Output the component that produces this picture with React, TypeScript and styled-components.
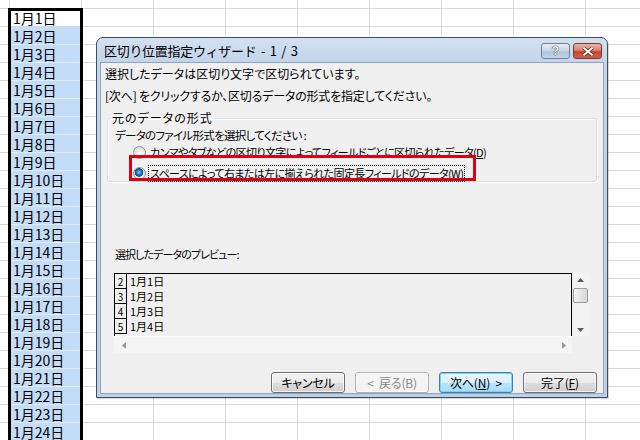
import styled, {createGlobalStyle} from 'styled-components'

const UI_FONT = `"Noto Sans CJK JP", "Noto Sans", sans-serif`

const GlobalStyle = createGlobalStyle`
  html, body {
    margin: 0;
    padding: 0;
    background: #fff;
  }
  body {
    font-family: ${UI_FONT};
    color: #000;
  }
`

const COLS = 10
const ROWS = 25

function App() {
  const cells = []
  for (let r = 0; r < ROWS; r++) {
    for (let c = 0; c < COLS; c++) {
      const isDate = c === 1 && r >= 1
      cells.push(
        <Cell key={`${r}-${c}`} $selected={c === 1 && r >= 2}>
          {isDate ? `1月${r}日` : ''}
        </Cell>,
      )
    }
  }

  return (
    <>
      <GlobalStyle />
      <Sheet>
        {cells}
        <SelectionFrame />
        <Dialog>
          <TitleBar>
            <Title>区切り位置指定ウィザード - 1 / 3</Title>
            <CaptionButtons>
              <CaptionButton $kind="help">?</CaptionButton>
              <CaptionButton $kind="close">
                <svg width="12" height="9" viewBox="0 0 12 9">
                  <path
                    d="M1.5 0.8 L10.5 8.2 M10.5 0.8 L1.5 8.2"
                    stroke="#4a1a14"
                    strokeWidth="3.4"
                  />
                  <path
                    d="M1.5 0.8 L10.5 8.2 M10.5 0.8 L1.5 8.2"
                    stroke="#fff"
                    strokeWidth="2"
                  />
                </svg>
              </CaptionButton>
            </CaptionButtons>
          </TitleBar>
          <Client>
            <Line $spacing={0}>選択したデータは区切り文字で区切られています。</Line>
            <Line $spacing={-0.2}>[次へ] をクリックするか、区切るデータの形式を指定してください。</Line>
            <Group>
              <Legend>元のデータの形式</Legend>
              <GroupText>データのファイル形式を選択してください :</GroupText>
              <RadioRow>
                <Radio />
                <RadioLabel>
                  カンマやタブなどの区切り文字によってフィールドごとに区切られたデータ(<u>D</u>)
                </RadioLabel>
              </RadioRow>
              <RadioRow $second>
                <Radio $checked />
                <RadioLabel $focused>
                  スペースによって右または左に揃えられた固定長フィールドのデータ(<u>W</u>)
                </RadioLabel>
              </RadioRow>
            </Group>
            <PreviewLabel>選択したデータのプレビュー:</PreviewLabel>
            <Preview>
              <PreviewData>
                {[1, 2, 3, 4].map((d) => (
                  <PreviewRow key={d}>
                    <RowNumber>{d + 1}</RowNumber>
                    <RowText>1月{d}日</RowText>
                  </PreviewRow>
                ))}
              </PreviewData>
              <VScroll>
                <Arrow viewBox="0 0 7 4" width="7" height="4">
                  <polygon points="0,4 7,4 3.5,0" fill="#5d5d5d" />
                </Arrow>
                <Thumb />
                <VSpacer />
                <Arrow viewBox="0 0 7 4" width="7" height="4">
                  <polygon points="0,0 7,0 3.5,4" fill="#5d5d5d" />
                </Arrow>
              </VScroll>
              <HScroll>
                <Arrow viewBox="0 0 4 7" width="4" height="7">
                  <polygon points="4,0 4,7 0,3.5" fill="#9a9a9a" />
                </Arrow>
                <Arrow viewBox="0 0 4 7" width="4" height="7">
                  <polygon points="0,0 0,7 4,3.5" fill="#9a9a9a" />
                </Arrow>
              </HScroll>
              <ScrollCorner />
            </Preview>
            <ButtonRow>
              <Button>キャンセル</Button>
              <Button $variant="disabled" disabled>
                &lt;&nbsp;戻る(B)
              </Button>
              <Button $variant="default">
                次へ(<u>N</u>)&nbsp;&gt;
              </Button>
              <Button>
                完了(<u>F</u>)
              </Button>
            </ButtonRow>
          </Client>
          <Highlight />
        </Dialog>
      </Sheet>
    </>
  )
}

const Sheet = styled.div`
  position: relative;
  width: 640px;
  height: 440px;
  overflow: hidden;
  display: grid;
  grid-template-columns: 10px repeat(9, 72px);
  grid-template-rows: 9px repeat(24, 18px);
`

const Cell = styled.div<{$selected?: boolean}>`
  box-sizing: border-box;
  border-right: 1px solid #d6d9dd;
  border-bottom: 1px solid ${({$selected}) => ($selected ? '#e2ecf8' : '#d6d9dd')};
  background: ${({$selected}) => ($selected ? '#c3dcf8' : '#fff')};
  padding: 0 0 0 3px;
  font-family: ${UI_FONT};
  font-size: 14px;
  line-height: 18px;
  white-space: nowrap;
  overflow: hidden;
`

const SelectionFrame = styled.div`
  position: absolute;
  left: 8px;
  top: 8px;
  width: 75px;
  height: 460px;
  box-sizing: border-box;
  border: 3px solid #000;
`

const Dialog = styled.div`
  position: absolute;
  left: 96px;
  top: 37px;
  width: 512px;
  height: 361px;
  box-sizing: border-box;
  display: flex;
  flex-direction: column;
  border: 1px solid #3f4c5c;
  border-radius: 7px 7px 0 0;
  background: linear-gradient(#d3e1f1 0px, #c3d5ea 24px, #bcd0e8 100%);
  box-shadow: 1px 1px 0 rgba(0, 0, 0, 0.15);
  padding: 0 3px 3px 3px;
`

const TitleBar = styled.div`
  height: 24px;
  display: flex;
  align-items: center;
  justify-content: space-between;
  padding-left: 4px;
`

const Title = styled.div`
  font-size: 13px;
  line-height: 16px;
  margin-top: 2px;
  letter-spacing: -0.3px;
  word-spacing: 2px;
  color: #000;
`

const CaptionButtons = styled.div`
  display: flex;
  gap: 3px;
  align-self: flex-start;
  margin-top: 5px;
  margin-right: 2px;
`

const CaptionButton = styled.div<{$kind: 'help' | 'close'}>`
  width: 29px;
  height: 16px;
  box-sizing: border-box;
  border: 1px solid ${({$kind}) => ($kind === 'close' ? '#7a3a32' : '#6f7f95')};
  border-radius: 3px;
  display: flex;
  align-items: center;
  justify-content: center;
  font-family: "Liberation Sans", sans-serif;
  font-weight: bold;
  font-size: 12px;
  line-height: 1;
  color: #fff;
  text-shadow: 0 0 1px #2b3a4e, 0 0 1px #2b3a4e;
  background: ${({$kind}) =>
    $kind === 'close'
      ? 'linear-gradient(#eab3a8 0%, #d9826f 45%, #c54630 55%, #d0624a 100%)'
      : 'linear-gradient(#e8eef6 0%, #cbd8e8 45%, #b2c5dc 55%, #c3d4e8 100%)'};
`

const Client = styled.div`
  flex: 1;
  box-sizing: border-box;
  background: #f0f0f0;
  border: 1px solid #8ea4bf;
  display: flex;
  flex-direction: column;
  font-size: 12px;
  font-feature-settings: "palt";
`

const Line = styled.div<{$spacing: number}>`
  height: 22px;
  line-height: 22px;
  padding-left: 4px;
  letter-spacing: ${({$spacing}) => $spacing}px;
  white-space: nowrap;
`

const Group = styled.fieldset`
  margin: 3px 6px 0 6px;
  padding: 0 0 0 7px;
  border: 1px solid #d5dfe5;
  border-radius: 3px;
  box-shadow: inset 1px 1px 0 #fff, 1px 1px 0 #fff;
  min-width: 0;
`

const Legend = styled.legend`
  padding: 0 2px;
  margin-left: -5px;
  line-height: 16px;
  letter-spacing: 1px;
`

const GroupText = styled.div`
  height: 18px;
  line-height: 18px;
  font-size: 11.5px;
  letter-spacing: -0.7px;
  white-space: nowrap;
`

const RadioRow = styled.div<{$second?: boolean}>`
  display: flex;
  align-items: center;
  gap: 2px;
  height: 16px;
  margin-top: ${({$second}) => ($second ? '5px' : '0')};
  padding-left: 18px;
  white-space: nowrap;
`

const Radio = styled.span<{$checked?: boolean}>`
  width: 13px;
  height: 13px;
  box-sizing: border-box;
  border-radius: 50%;
  border: 1px solid #8e8f8f;
  flex: none;
  background: ${({$checked}) =>
    $checked
      ? 'radial-gradient(circle at 45% 40%, #9fd6f7 0, #2c87c7 2px, #0f4f86 4px, #dde3ea 4.6px, #f4f4f4 100%)'
      : 'radial-gradient(circle at 50% 60%, #fbfbfb 0, #e3e3e3 60%, #d4d4d4 100%)'};
`

const RadioLabel = styled.span<{$focused?: boolean}>`
  font-size: 11px;
  letter-spacing: -0.6px;
  line-height: 15px;
  padding: 0 1px;
  border: 1px dotted ${({$focused}) => ($focused ? '#000' : 'transparent')};
`

const PreviewLabel = styled.div`
  margin-top: 62px;
  height: 20px;
  line-height: 20px;
  padding-left: 14px;
  font-size: 11px;
  letter-spacing: -0.9px;
`

const Preview = styled.div`
  margin: 9px 0 0 13px;
  width: 475px;
  height: 80px;
  display: grid;
  grid-template-columns: 1fr 17px;
  grid-template-rows: 63px 17px;
`

const PreviewData = styled.div`
  box-sizing: border-box;
  border: 1px solid #000;
  border-bottom: none;
  overflow: hidden;
`

const PreviewRow = styled.div`
  display: flex;
  align-items: flex-end;
  height: 15px;
`

const RowNumber = styled.div`
  align-self: stretch;
  width: 12px;
  box-sizing: border-box;
  border-right: 1px solid #000;
  border-bottom: 1px solid #000;
  font-size: 10px;
  line-height: 15px;
  text-align: center;
  flex: none;
`

const RowText = styled.div`
  padding-left: 3px;
  font-size: 11px;
  line-height: 15px;
`

const VScroll = styled.div`
  background: #f3f3f3;
  display: flex;
  flex-direction: column;
  align-items: center;
  padding: 5px 0 4px 0;
  box-sizing: border-box;
`

const VSpacer = styled.div`
  flex: 1;
`

const Arrow = styled.svg`
  display: block;
  flex: none;
`

const Thumb = styled.div`
  margin-top: 6px;
  width: 15px;
  height: 15px;
  box-sizing: border-box;
  border: 1px solid #9b9b9b;
  border-radius: 2px;
  background: linear-gradient(90deg, #f5f5f5, #e6e6e6 50%, #d6d6d6);
`

const HScroll = styled.div`
  background: #f5f5f5;
  border-top: 1px solid #fafafa;
  display: flex;
  align-items: center;
  justify-content: space-between;
  padding: 0 6px 0 8px;
`

const ScrollCorner = styled.div`
  background: #f0f0f0;
`

const ButtonRow = styled.div`
  display: flex;
  justify-content: flex-end;
  gap: 10px;
  margin-top: 19px;
  padding-right: 6px;
`

const Button = styled.button<{$variant?: 'normal' | 'disabled' | 'default'}>`
  width: 74px;
  height: 21px;
  box-sizing: border-box;
  padding: 0;
  font-family: ${UI_FONT};
  font-size: 12px;
  letter-spacing: -0.2px;
  word-spacing: 3px;
  font-feature-settings: "palt";
  line-height: 18px;
  border-radius: 3px;
  border: 1px solid
    ${({$variant}) =>
      $variant === 'disabled' ? '#adb2b5' : $variant === 'default' ? '#3c7fb1' : '#707070'};
  color: ${({$variant}) => ($variant === 'disabled' ? '#8a8a8a' : '#000')};
  background: ${({$variant}) =>
    $variant === 'disabled'
      ? '#f4f4f4'
      : $variant === 'default'
        ? 'linear-gradient(#eaf6fd 0%, #d9f0fc 50%, #bee6fd 51%, #a7d9f5 100%)'
        : 'linear-gradient(#f2f2f2 0%, #ebebeb 50%, #dddddd 51%, #cfcfcf 100%)'};
  box-shadow: ${({$variant}) =>
    $variant === 'default' ? 'inset 0 0 0 1px #7fd0f4' : 'inset 0 0 0 1px rgba(255,255,255,0.7)'};
`

const Highlight = styled.div`
  position: absolute;
  left: 32px;
  top: 117px;
  width: 347px;
  height: 26px;
  box-sizing: border-box;
  border: 3px solid #e00010;
`

export default App
